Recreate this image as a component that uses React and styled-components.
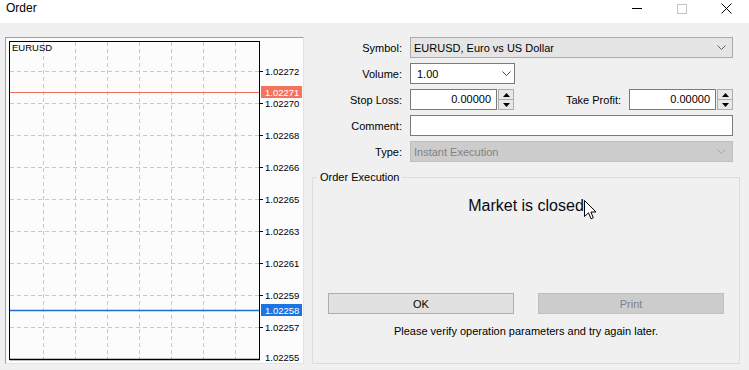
import React from "react";
import styled, { createGlobalStyle } from "styled-components";

const GlobalStyle = createGlobalStyle`
  html, body { margin: 0; padding: 0; background: #f0f0f0; }
  body {
    font-family: "Liberation Sans", Arial, sans-serif;
    font-size: 11px;
    color: #000;
  }
`;

const Window = styled.div`
  width: 749px;
  height: 370px;
  overflow: hidden;
  display: flex;
  flex-direction: column;
  background: #f0f0f0;
`;

const TitleBar = styled.div`
  height: 23px;
  flex: none;
  background: #ffffff;
  display: flex;
  align-items: flex-start;
`;

const TitleText = styled.div`
  flex: 1;
  padding-left: 6px;
  line-height: 17px;
  font-size: 12px;
`;

const WinButton = styled.div`
  width: 45px;
  height: 17px;
  display: flex;
  align-items: center;
  justify-content: center;
`;

const Body = styled.div`
  flex: 1;
  display: flex;
  gap: 8px;
  padding: 14px 0 0 5px;
`;

const ChartFrame = styled.div`
  width: 299px;
  height: 327px;
  box-sizing: border-box;
  border: 1px solid;
  border-color: #a0a0a0 #e3e3e3 #e3e3e3 #a0a0a0;
  background: #fcfcfc;
  display: flex;
`;

const RightCol = styled.div`
  width: 428px;
  display: flex;
  flex-direction: column;
`;

const FormGrid = styled.div`
  display: grid;
  grid-template-columns: 90px 323px;
  grid-auto-rows: 21px;
  column-gap: 8px;
  row-gap: 5px;
`;

const Label = styled.div`
  text-align: right;
  align-self: center;
  white-space: nowrap;
`;

const Select = styled.div`
  box-sizing: border-box;
  height: 21px;
  width: ${(p) => p.$width || "100%"};
  display: flex;
  align-items: center;
  justify-content: space-between;
  padding: 0 ${(p) => p.$padRight || 6}px 0 ${(p) => p.$padLeft || 3}px;
  border: 1px solid
    ${(p) =>
      p.$variant === "white" ? "#7a7a7a" : p.$variant === "disabled" ? "#bfbfbf" : "#adadad"};
  background: ${(p) =>
    p.$variant === "white" ? "#ffffff" : p.$variant === "disabled" ? "#cccccc" : "#e5e5e5"};
  color: ${(p) => (p.$variant === "disabled" ? "#838383" : "#000")};
`;

const SpinRow = styled.div`
  display: flex;
  align-items: center;
`;

const SideLabel = styled.div`
  flex: 1;
  text-align: right;
  padding-right: 8px;
  white-space: nowrap;
`;

const SpinBox = styled.div`
  width: 104px;
  height: 21px;
  display: flex;
  gap: 1px;
`;

const NumInput = styled.div`
  flex: 1;
  box-sizing: border-box;
  border: 1px solid #7a7a7a;
  background: #fff;
  text-align: right;
  padding-right: 5px;
  line-height: 19px;
`;

const Spinner = styled.div`
  width: 16px;
  box-sizing: border-box;
  border: 1px solid #adadad;
  background: #e8e8e8;
  display: flex;
  flex-direction: column;
`;

const SpinHalf = styled.div`
  flex: 1;
  display: flex;
  align-items: center;
  justify-content: center;
  border-top: ${(p) => (p.$lower ? "1px solid #adadad" : "none")};
`;

const TextBox = styled.div`
  box-sizing: border-box;
  height: 21px;
  border: 1px solid #7a7a7a;
  background: #fff;
`;

const GroupBox = styled.div`
  position: relative;
  margin-top: 15px;
  box-sizing: border-box;
  height: 187px;
  border: 1px solid #dcdcdc;
  padding: 0 15px;
  display: flex;
  flex-direction: column;
`;

const GroupTitle = styled.div`
  position: absolute;
  top: -7px;
  left: 4px;
  padding: 0 3px;
  line-height: 13px;
  background: #f0f0f0;
`;

const Message = styled.div`
  margin-top: 18px;
  font-size: 16px;
  line-height: 19px;
  text-align: center;
  color: #0a0a14;
`;

const ButtonRow = styled.div`
  margin-top: 78px;
  display: flex;
  gap: 24px;
`;

const Button = styled.div`
  width: 186px;
  height: 21px;
  box-sizing: border-box;
  display: flex;
  align-items: center;
  justify-content: center;
  border: 1px solid ${(p) => (p.$disabled ? "#bfbfbf" : "#adadad")};
  background: ${(p) => (p.$disabled ? "#cccccc" : "#e1e1e1")};
  color: ${(p) => (p.$disabled ? "#838383" : "#000")};
`;

const Note = styled.div`
  margin-top: 11px;
  line-height: 13px;
  text-align: center;
`;

const Cursor = styled.svg`
  position: absolute;
  left: 271px;
  top: 22px;
`;

const Chevron = ({ color = "#555" }) => (
  <svg width="9" height="5" viewBox="0 0 9 5">
    <polyline points="0.5,0.5 4.5,4.5 8.5,0.5" fill="none" stroke={color} strokeWidth="1" />
  </svg>
);

const Tri = ({ down }) => (
  <svg width="7" height="4" viewBox="0 0 7 4">
    <polygon points={down ? "0,0 7,0 3.5,4" : "0,4 7,4 3.5,0"} fill="#000" />
  </svg>
);

const Spin = ({ value }) => (
  <SpinBox>
    <NumInput>{value}</NumInput>
    <Spinner>
      <SpinHalf>
        <Tri />
      </SpinHalf>
      <SpinHalf $lower>
        <Tri down />
      </SpinHalf>
    </Spinner>
  </SpinBox>
);

const gridY = [33, 65, 97, 129, 161, 193, 225, 257, 289];
const gridLabels = [
  "1.02272",
  "1.02270",
  "1.02268",
  "1.02266",
  "1.02265",
  "1.02263",
  "1.02261",
  "1.02259",
  "1.02257",
];
const gridX = [37, 69, 101, 133, 165, 197, 229];
const FONT = "Liberation Sans, Arial, sans-serif";

const Chart = () => (
  <svg width="297" height="325" viewBox="0 0 297 325" style={{ display: "block" }}>
    <rect x="3" y="3" width="251" height="319" fill="#fcfcfc" />
    {gridX.map((x) => (
      <line key={x} x1={x + 0.5} y1="4" x2={x + 0.5} y2="321" stroke="#c8c8c8" strokeDasharray="4 3" />
    ))}
    {gridY.map((y) => (
      <line key={y} x1="4" y1={y + 0.5} x2="253" y2={y + 0.5} stroke="#c8c8c8" strokeDasharray="4 3" />
    ))}
    <rect x="3.5" y="3.5" width="250" height="318" fill="none" stroke="#000" strokeWidth="1" />
    <line x1="3.5" y1="321.5" x2="254" y2="321.5" stroke="#000" strokeWidth="1.5" />
    {gridY.map((y) => (
      <line key={"t" + y} x1="254" y1={y + 0.5} x2="257" y2={y + 0.5} stroke="#000" />
    ))}
    <g fontFamily={FONT} fontSize="9.5" fill="#000">
      <text x="6" y="13">EURUSD</text>
      {gridY.map((y, i) => (
        <text key={"l" + y} x="259" y={y + 4}>
          {gridLabels[i]}
        </text>
      ))}
      <text x="259" y="323">1.02255</text>
    </g>
    <line x1="4" y1="54.5" x2="253" y2="54.5" stroke="#f0705c" strokeWidth="1" />
    <rect x="255" y="48" width="41" height="12" fill="#f4735e" />
    <text x="259" y="58" fontFamily={FONT} fontSize="9.5" fill="#fff">
      1.02271
    </text>
    <line x1="4" y1="272.5" x2="253" y2="272.5" stroke="#1f6fd0" strokeWidth="1.5" />
    <rect x="255" y="266" width="41" height="12" fill="#1b74e4" />
    <text x="259" y="276" fontFamily={FONT} fontSize="9.5" fill="#fff">
      1.02258
    </text>
  </svg>
);

export default function App() {
  return (
    <>
      <GlobalStyle />
      <Window>
        <TitleBar>
          <TitleText>Order</TitleText>
          <WinButton>
            <svg width="10" height="10" viewBox="0 0 10 10">
              <line x1="0" y1="4.5" x2="10" y2="4.5" stroke="#000" />
            </svg>
          </WinButton>
          <WinButton>
            <svg width="10" height="10" viewBox="0 0 10 10">
              <rect x="0.5" y="0.5" width="9" height="9" fill="none" stroke="#c4c4c4" />
            </svg>
          </WinButton>
          <WinButton>
            <svg width="11" height="11" viewBox="0 0 11 11">
              <path d="M0.5 0.5 L10.5 10.5 M10.5 0.5 L0.5 10.5" stroke="#000" strokeWidth="1" />
            </svg>
          </WinButton>
        </TitleBar>
        <Body>
          <ChartFrame>
            <Chart />
          </ChartFrame>
          <RightCol>
            <FormGrid>
              <Label>Symbol:</Label>
              <Select>
                <span>EURUSD, Euro vs US Dollar</span>
                <Chevron color="#666" />
              </Select>
              <Label>Volume:</Label>
              <Select $variant="white" $width="105px" $padLeft={6} $padRight={3}>
                <span>1.00</span>
                <Chevron color="#444" />
              </Select>
              <Label>Stop Loss:</Label>
              <SpinRow>
                <Spin value="0.00000" />
                <SideLabel>Take Profit:</SideLabel>
                <Spin value="0.00000" />
              </SpinRow>
              <Label>Comment:</Label>
              <TextBox />
              <Label>Type:</Label>
              <Select $variant="disabled">
                <span>Instant Execution</span>
                <Chevron color="#a8a8a8" />
              </Select>
            </FormGrid>
            <GroupBox>
              <GroupTitle>Order Execution</GroupTitle>
              <Message>Market is closed</Message>
              <ButtonRow>
                <Button>OK</Button>
                <Button $disabled>Print</Button>
              </ButtonRow>
              <Note>Please verify operation parameters and try again later.</Note>
              <Cursor width="13" height="20" viewBox="0 0 13 20">
                <path
                  d="M0.5 0.5 L0.5 16.5 L4.5 12.8 L7 18.8 L9.3 17.8 L6.9 12 L12 12 Z"
                  fill="#fff"
                  stroke="#000"
                  strokeWidth="1"
                  strokeLinejoin="round"
                />
              </Cursor>
            </GroupBox>
          </RightCol>
        </Body>
      </Window>
    </>
  );
}
